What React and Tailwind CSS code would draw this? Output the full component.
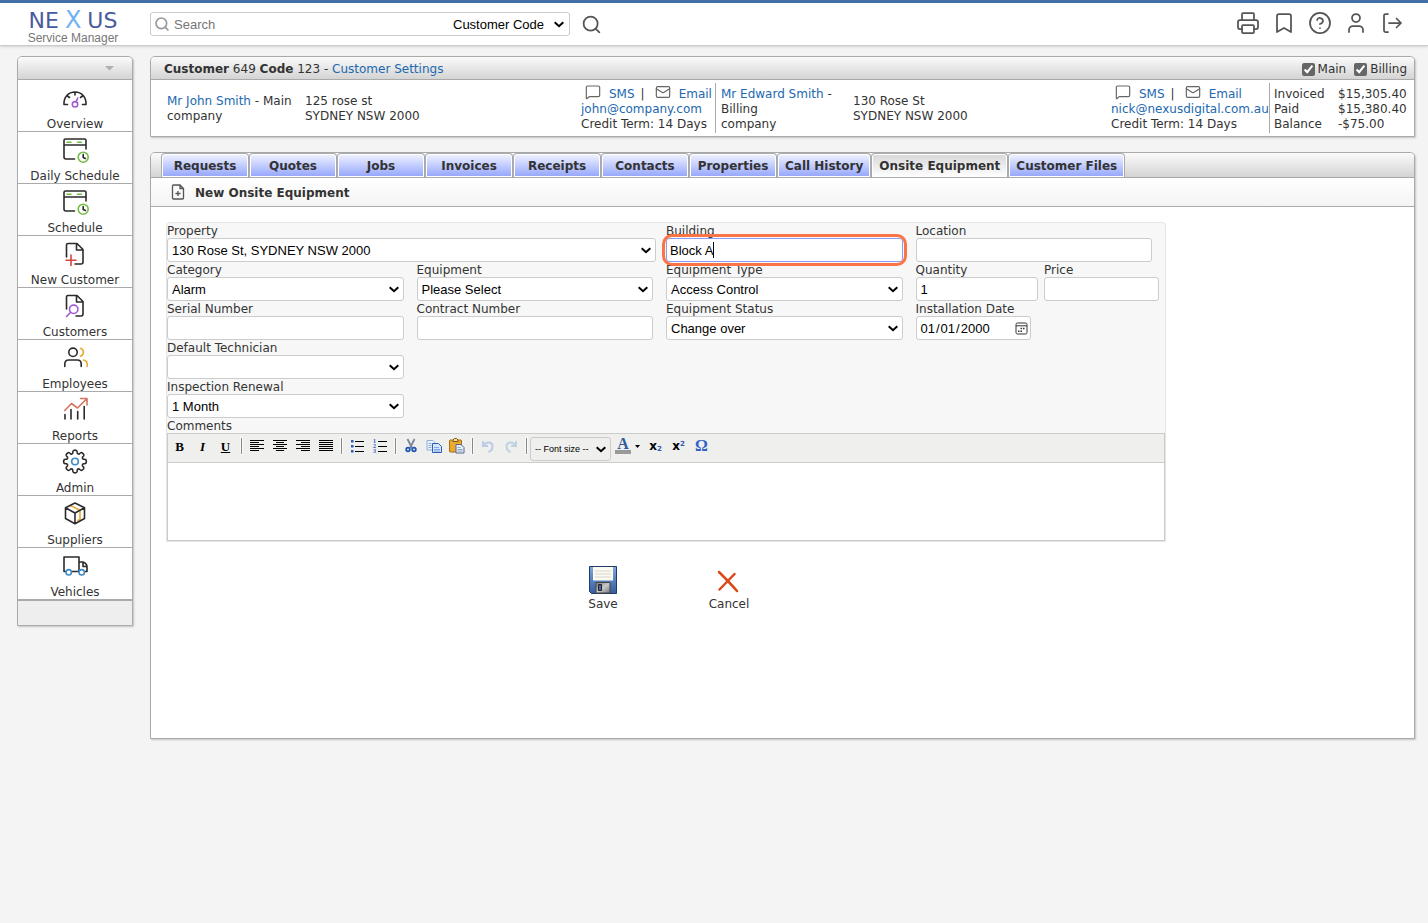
import React, { useState } from 'react';
import { Bookmark, CircleHelp, Mail, MessageSquare, Printer, Search, User } from 'lucide-react';

const DARK = '#2b2b2b';

const Icon = ({ children }) => (
  <svg width="28" height="28" viewBox="0 0 28 28" fill="none" stroke={DARK} strokeWidth="1.6" strokeLinecap="round" strokeLinejoin="round">
    {children}
  </svg>
);

const OverviewIcon = () => (
  <Icon>
    <path d="M3 20.5h3.5M21.5 20.5H25M3 20.5C2.5 13 7.5 8 14 8s11.500 5 11 12.500M14 8v3M6.500 12l2 1.500M21.500 12l-2 1.500" />
    <circle cx="14" cy="20.300" r="2.700" stroke="#a25bd0" />
    <path d="M15.200 17.600l1.500-3.600" stroke="#a25bd0" />
  </Icon>
);

const ScheduleIcon = () => (
  <Icon>
    <path d="M3 9h22M25 13V4.500Q25 3 23.500 3h-19Q3 3 3 4.500V21q0 2 2 2h8.500" />
    <path d="M6 6.300h4M16.500 6.300h4" stroke="#74bd46" />
    <circle cx="22.200" cy="21.200" r="5" stroke="#74bd46" />
    <path d="M22.200 18.500v3l2.200 1" />
  </Icon>
);

const NewCustomerIcon = () => (
  <Icon>
    <path d="M5.500 17V5q0-1.500 1.500-1.500h9l6 6V22q0 2-2 2h-6M15.500 3.500V10H22" />
    <path d="M10 15v10.500M5 20.200h10" stroke="#d5453c" />
  </Icon>
);

const CustomersIcon = () => (
  <Icon>
    <path d="M5.500 17V5q0-1.500 1.500-1.500h9l6 6V22q0 2-2 2h-5M15.500 3.500V10H22" />
    <circle cx="12.700" cy="17.300" r="4.200" stroke="#a25bd0" />
    <path d="M9.700 20.300L5.500 24.500" stroke="#a25bd0" />
  </Icon>
);

const EmployeesIcon = () => (
  <Icon>
    <circle cx="12" cy="8.300" r="4.200" />
    <path d="M3.800 22.500V20q0-4 4-4h8.400q4 0 4 4v2.500" />
    <path d="M19.500 4.300a4.200 4.200 0 0 1 0 8M22.500 16q3.700 1 3.700 4v2.500" stroke="#e8ac35" />
  </Icon>
);

const ReportsIcon = () => (
  <Icon>
    <path d="M4 18.500V23M10 13.500V23M16.700 15.500V23M23.200 10.500V23" />
    <path d="M3.700 14.500L10.500 7.500l6 4.500 9-9M19.500 2.500H26V9" stroke="#d4755f" />
  </Icon>
);

// eight rounded teeth around the hub
const gearPath = Array.from({ length: 8 }, (_, i) => {
  const at = (r, deg) => {
    const a = ((i * 45 + deg - 90) * Math.PI) / 180;
    return `${(14 + r * Math.cos(a)).toFixed(2)} ${(13.5 + r * Math.sin(a)).toFixed(2)}`;
  };
  return `${i ? 'L' : 'M'}${at(8.6, -15)} Q${at(11, -13)} ${at(11.2, -7)} Q${at(11.6, 0)} ${at(11.2, 7)} Q${at(11, 13)} ${at(8.6, 15)} Q${at(7.6, 22.5)} ${at(8.6, 30)}`;
}).join(' ') + 'Z';

const AdminIcon = () => (
  <Icon>
    <path d={gearPath} />
    <circle cx="14" cy="13.500" r="3.300" stroke="#3d8bc9" />
  </Icon>
);

const SuppliersIcon = () => (
  <Icon>
    <path d="M9.500 5.500l9.500 4.800v9l-2 1.200" stroke="#e8ac35" />
    <path d="M14 3l9.500 4.800v10.700L14 23.700 4.500 18.500V7.800zM4.500 7.800L14 13l9.500-5.200M14 13v10.700" />
  </Icon>
);

const VehiclesIcon = () => (
  <Icon>
    <path d="M5 19.500H3V5h15v14.500h-7.500M18 10h4q4 1.500 4 5v4.500h-2M22 10v4.500h4" />
    <circle cx="7.700" cy="20.300" r="2.700" stroke="#3d8bc9" />
    <circle cx="20.700" cy="20.300" r="2.700" stroke="#3d8bc9" />
  </Icon>
);

const menu = [
  { label: 'Overview', icon: OverviewIcon },
  { label: 'Daily Schedule', icon: ScheduleIcon },
  { label: 'Schedule', icon: ScheduleIcon },
  { label: 'New Customer', icon: NewCustomerIcon },
  { label: 'Customers', icon: CustomersIcon },
  { label: 'Employees', icon: EmployeesIcon },
  { label: 'Reports', icon: ReportsIcon },
  { label: 'Admin', icon: AdminIcon },
  { label: 'Suppliers', icon: SuppliersIcon },
  { label: 'Vehicles', icon: VehiclesIcon },
];

const tabs = [
  'Requests', 'Quotes', 'Jobs', 'Invoices', 'Receipts',
  'Contacts', 'Properties', 'Call History', 'Onsite Equipment', 'Customer Files',
];

const link = 'text-[#2268b0]';
const control = "block h-6 w-full rounded-[3px] border border-[#ccc] bg-white font-['Liberation_Sans',sans-serif] text-[13px] text-black";
const panel = 'rounded-t-[5px] border border-[#aaa] bg-white shadow-[1px_1px_2px_rgba(0,0,0,0.2)]';
const silver = 'bg-linear-to-b from-[#fbfbfb] to-[#d3d4d3]';

// select with our own chevron in place of the browser's
function Select({ className, wrapper = 'w-full', children, ...props }) {
  return (
    <div className={`relative ${wrapper}`}>
      <select className={`appearance-none pl-1 ${className}`} {...props}>{children}</select>
      <svg width="10" height="7" viewBox="0 0 10 7" fill="none" stroke="#000" strokeWidth="2" className="pointer-events-none absolute inset-y-0 right-[5px] my-auto">
        <path d="M0.700 1.200L5 5.200l4.300-4" />
      </svg>
    </div>
  );
}

function Header() {
  return (
    <header className="flex h-[46px] items-center border-t-[3px] border-b border-t-[#426fa8] border-b-[#ccc] bg-white pr-6 shadow-sm">
      <a href="#" aria-label="Nexus Service Manager" className="flex w-[150px] flex-col items-center pt-1 pr-1 font-['Liberation_Sans',sans-serif]">
        <span className="flex h-6 items-baseline gap-1.5 font-['DejaVu_Sans',sans-serif] text-[22px] leading-6 text-[#4a5a9c]">
          <span>NE</span>
          <span className="text-2xl leading-6 text-[#6fb1f3]">X</span>
          <span>US</span>
        </span>
        <span className="text-xs leading-3 text-[#777]">Service Manager</span>
      </a>
      <form className="flex items-center" onSubmit={(e) => e.preventDefault()}>
        <div className="flex h-6 w-[420px] items-center rounded-[3px] border border-[#ccc] pl-[3px] font-['Liberation_Sans',sans-serif] text-[13px]">
          <Search className="size-4 text-[#999]" strokeWidth={2.5} />
          <input aria-label="Search" placeholder="Search" className="ml-1 min-w-0 flex-1 outline-none placeholder:text-[#757575]" />
          <Select aria-label="Search by" wrapper="w-[120px]" className="h-5 w-full text-black">
            <option>Customer Code</option>
          </Select>
        </div>
        <button type="submit" aria-label="Search" className="ml-[11px] text-[#555]">
          <Search className="size-[21px]" strokeWidth={2} />
        </button>
      </form>
      <nav className="ml-auto flex items-center gap-3 pb-0.5 text-[#555]">
        <button aria-label="Print"><Printer className="size-6" strokeWidth={1.75} /></button>
        <button aria-label="Bookmarks"><Bookmark className="size-6" strokeWidth={1.75} /></button>
        <button aria-label="Help"><CircleHelp className="size-6" strokeWidth={1.75} /></button>
        <button aria-label="Account"><User className="size-6" strokeWidth={1.75} /></button>
        <button aria-label="Log out">
          <svg width="24" height="24" viewBox="0 0 24 24" fill="none" stroke="currentColor" strokeWidth="1.75" strokeLinecap="round" strokeLinejoin="round">
            <path d="M8 3H5.500Q4 3 4 4.500v15Q4 21 5.500 21H8M9 12h12M16.500 7.500L21 12l-4.500 4.500" />
          </svg>
        </button>
      </nav>
    </header>
  );
}

function Sidebar() {
  return (
    <aside className={`w-[116px] shrink-0 ${panel}`}>
      <div className={`flex h-[23px] items-center justify-end rounded-t-[4px] border-b border-[#aaa] pr-[18px] ${silver}`}>
        <svg width="9" height="5" viewBox="0 0 9 5"><path d="M0 0h9L4.500 4.500z" fill="#b0b0b0" /></svg>
      </div>
      <ul>
        {menu.map(({ label, icon: MenuIcon }) => (
          <li key={label} className="border-b border-[#aaa]">
            <a href="#" className="block h-[51px] text-center leading-[17px]">
              <span className="flex h-9 items-center justify-center"><MenuIcon /></span>
              {label}
            </a>
          </li>
        ))}
      </ul>
      <div className="h-[25px] border-t border-[#aaa] bg-[#eee]" />
    </aside>
  );
}

function ContactLinks({ email }) {
  return (
    <div>
      <div className="flex h-[15px] items-center">
        <MessageSquare className="mr-2 mb-1 ml-1 size-4 text-[#666]" strokeWidth={1.75} />
        <a href="#" className={link}>SMS</a>
        <span className="mx-1.5">|</span>
        <Mail className="mr-2 mb-1 ml-1 size-4 text-[#666]" strokeWidth={1.75} />
        <a href="#" className={link}>Email</a>
      </div>
      <a href="#" className={`block ${link}`}>{email}</a>
      <div>Credit Term: 14 Days</div>
    </div>
  );
}

function CustomerPanel() {
  return (
    <section className={panel}>
      <div className={`flex h-[23px] items-center rounded-t-[4px] border-b border-[#aaa] pt-0.5 pr-[7px] pl-[13px] ${silver}`}>
        <div className="flex-1">
          <b>Customer</b> 649 <b>Code</b> 123 - <a href="#" className={link}>Customer Settings</a>
        </div>
        <label className="mr-2 flex items-center gap-[3px]">
          <input type="checkbox" defaultChecked className="size-[13px] accent-[#666]" />Main
        </label>
        <label className="flex items-center gap-[3px]">
          <input type="checkbox" defaultChecked className="size-[13px] accent-[#666]" />Billing
        </label>
      </div>
      <div className="grid h-14 grid-cols-[138px_276fr_135px_137px_258fr_159px_64px_80px] items-center pl-4 whitespace-nowrap">
        <div className="pt-0.5">
          <a href="#" className={link}>Mr John Smith</a> - Main<br />company
        </div>
        <div className="pt-0.5">125 rose st<br />SYDNEY NSW 2000</div>
        <div className="flex h-[50px] items-center border-r border-[#aaa] pt-0.5"><ContactLinks email="john@company.com" /></div>
        <div className="pt-0.5 pl-[5px]">
          <a href="#" className={link}>Mr Edward Smith</a> -<br />Billing<br />company
        </div>
        <div className="pt-0.5">130 Rose St<br />SYDNEY NSW 2000</div>
        <div className="flex h-[50px] items-center border-r border-[#aaa] pt-0.5"><ContactLinks email="nick@nexusdigital.com.au" /></div>
        <div className="pt-0.5 pl-1">Invoiced<br />Paid<br />Balance</div>
        <div className="pt-0.5 pl-1">$15,305.40<br />$15,380.40<br />-$75.00</div>
      </div>
    </section>
  );
}

function Field({ id, label, className = 'pr-[13px]', children }) {
  return (
    <div className={className}>
      <label htmlFor={id} className="block h-[15px] leading-[17px]">{label}</label>
      {children}
    </div>
  );
}

function SelectField({ id, label, value, className }) {
  return (
    <Field id={id} label={label} className={className}>
      <Select id={id} className={control}>
        <option>{value}</option>
      </Select>
    </Field>
  );
}

function TextField({ id, label, value, className }) {
  return (
    <Field id={id} label={label} className={className}>
      <input id={id} defaultValue={value} className={`${control} px-1`} />
    </Field>
  );
}

const ToolButton = ({ label, children }) => (
  <button type="button" aria-label={label} className="flex h-6 w-[23px] items-center justify-center font-['Liberation_Serif',serif] text-[13px] font-bold text-black">
    {children}
  </button>
);

const Separator = () => <span className="mr-[3px] ml-1 h-4 w-px bg-[#888] ring-1 ring-white/60" />;

const Tool = ({ children }) => <svg width="16" height="16" viewBox="0 0 16 16" fill="none">{children}</svg>;

const Lines = ({ d }) => <Tool><path d={d} stroke="#000" shapeRendering="crispEdges" /></Tool>;

function Toolbar() {
  return (
    <div className="flex h-[29px] items-start border-b border-[#ccc] bg-[#efefee]">
      <div className="flex items-center">
        <ToolButton label="Bold">B</ToolButton>
        <ToolButton label="Italic"><i>I</i></ToolButton>
        <ToolButton label="Underline"><u>U</u></ToolButton>
        <Separator />
        <ToolButton label="Align left"><Lines d="M1 2.500h14M1 4.500h9M1 6.500h14M1 8.500h9M1 10.500h14M1 12.500h9" /></ToolButton>
        <ToolButton label="Align center"><Lines d="M1 2.500h14M4 4.500h8M1 6.500h14M4 8.500h8M1 10.500h14M4 12.500h8" /></ToolButton>
        <ToolButton label="Align right"><Lines d="M1 2.500h14M6 4.500h9M1 6.500h14M6 8.500h9M1 10.500h14M6 12.500h9" /></ToolButton>
        <ToolButton label="Justify"><Lines d="M1 2.500h14M1 4.500h14M1 6.500h14M1 8.500h14M1 10.500h14M1 12.500h14" /></ToolButton>
        <Separator />
        <ToolButton label="Bullet list">
          <Tool>
            <path d="M6 3.500h9M6 8.500h9M6 13.500h9" stroke="#000" />
            <path d="M2 2h2.500v2.500H2zM2 7h2.500v2.500H2zM2 12h2.500v2.500H2z" fill="#2d5ab5" />
          </Tool>
        </ToolButton>
        <ToolButton label="Numbered list">
          <Tool>
            <path d="M6 3.500h9M6 8.500h9M6 13.500h9" stroke="#000" />
            <text x="1" y="5" fontSize="6" fill="#2d5ab5">1</text>
            <text x="1" y="10" fontSize="6" fill="#2d5ab5">2</text>
            <text x="1" y="15" fontSize="6" fill="#2d5ab5">3</text>
          </Tool>
        </ToolButton>
        <Separator />
        <ToolButton label="Cut">
          <Tool>
            <path d="M4.500 1l4.500 9M11.500 1L7 10" stroke="#7c8797" strokeWidth="1.800" />
            <circle cx="5" cy="11.500" r="1.800" stroke="#1f56b3" strokeWidth="1.800" />
            <circle cx="11" cy="11.500" r="1.800" stroke="#1f56b3" strokeWidth="1.800" />
          </Tool>
        </ToolButton>
        <ToolButton label="Copy">
          <Tool>
            <path d="M1 2.500h6l2.500 2.500v7H1z" fill="#eaf2fd" stroke="#8cb0e0" />
            <path d="M6.500 5.500h6l3 3v6h-9z" fill="#d4e4fa" stroke="#2d5fb8" />
            <path d="M2.500 5.500h3M2.500 7.500h3M2.500 9.500h3M8 9.500h5M8 11.500h6M8 13h6" stroke="#6f9ade" strokeWidth="0.800" />
          </Tool>
        </ToolButton>
        <ToolButton label="Paste">
          <Tool>
            <rect x="0.500" y="2" width="12" height="12" rx="1" fill="#eba92f" stroke="#a56a14" />
            <path d="M4 3.500V2l1.500-1.500h2L9 2v1.500z" fill="#f8dd7e" stroke="#7a541b" />
            <path d="M7 6.500h5l3 3v5.500H7z" fill="#e9effa" stroke="#55688c" />
            <path d="M8.500 9.500h3M8.500 11.500h5M8.500 13h5" stroke="#7a94bb" strokeWidth="0.800" />
          </Tool>
        </ToolButton>
        <Separator />
        <ToolButton label="Undo">
          <Tool><path d="M3 3v5h5M3.500 7.500C6 3 12.500 3.500 12.500 8.500c0 2.500-1.500 4.500-4 5.500" stroke="#bccbe5" strokeWidth="2" /></Tool>
        </ToolButton>
        <ToolButton label="Redo">
          <Tool><path d="M13 3v5H8M12.500 7.500C10 3 3.500 3.500 3.500 8.500c0 2.500 1.500 4.500 4 5.500" stroke="#c0d2e2" strokeWidth="2" /></Tool>
        </ToolButton>
        <Separator />
      </div>
      <Select
        aria-label="Font size"
        wrapper="mt-[3px] w-[81px]"
        className="block h-6 w-full rounded-[3px] border border-[#ccc] bg-[#efefee] font-['Liberation_Sans',sans-serif] text-[9px] text-black"
      >
        <option>-- Font size --</option>
      </Select>
      <div className="flex items-center">
        <button type="button" aria-label="Text colour" className="flex h-6 w-[33px] items-center justify-center gap-1">
          <span className="border-b-4 border-[#999] px-0.5 font-['Liberation_Serif',serif] text-base leading-3 font-bold text-[#31599b]">A</span>
          <svg width="5" height="3" viewBox="0 0 5 3"><path d="M0 0h5L2.500 3z" /></svg>
        </button>
        <button type="button" aria-label="Subscript" className="h-6 w-[23px] font-bold text-black">x<sub className="text-[7px] text-[#2d5ab5]">2</sub></button>
        <button type="button" aria-label="Superscript" className="h-6 w-[23px] font-bold text-black">x<sup className="text-[7px] text-[#2d5ab5]">2</sup></button>
        <button type="button" aria-label="Symbol" className="h-6 w-[23px] font-['Liberation_Serif',serif] text-base font-bold text-[#2f62c9]">Ω</button>
      </div>
    </div>
  );
}

function EquipmentForm() {
  const [building, setBuilding] = useState('Block A');

  return (
    <form className="max-w-[1000px]" onSubmit={(e) => e.preventDefault()}>
      <div className="rounded-t-[4px] border border-[#e5e5e5] bg-[#f7f7f7]">
        <div className="grid grid-cols-4">
          <SelectField id="property" label="Property" value="130 Rose St, SYDNEY NSW 2000" className="col-span-2 pr-2.5" />
          <Field id="building" label="Building">
            <div className="relative">
              <input
                id="building"
                value={building}
                onChange={(e) => setBuilding(e.target.value)}
                className={`${control} border-[#8a9cf5]! px-[3px]`}
              />
              <span className="absolute top-1 left-[47px] h-4 w-px bg-black" />
              <span className="pointer-events-none absolute -inset-1 rounded-[10px] border-[3px] border-[#fb7445]" />
            </div>
          </Field>
          <TextField id="location" label="Location" />

          <SelectField id="category" label="Category" value="Alarm" />
          <SelectField id="equipment" label="Equipment" value="Please Select" />
          <SelectField id="type" label="Equipment Type" value="Access Control" />
          <div className="flex gap-1.5 pr-1.5">
            <TextField id="quantity" label="Quantity" value="1" className="min-w-0 flex-1" />
            <TextField id="price" label="Price" className="w-[115px]" />
          </div>

          <TextField id="serial" label="Serial Number" />
          <TextField id="contract" label="Contract Number" />
          <SelectField id="status" label="Equipment Status" value="Change over" />
          <Field id="installed" label="Installation Date" className="w-[115px]">
            <div className="relative">
              <input
                id="installed"
                type="date"
                defaultValue="2000-01-01"
                className={`${control} px-[3px] [&::-webkit-calendar-picker-indicator]:opacity-0`}
              />
              <svg width="13" height="13" viewBox="0 0 13 13" fill="none" stroke="#333" className="pointer-events-none absolute inset-y-0 right-[3px] my-auto">
                <rect x="1" y="1" width="11" height="11" rx="1.500" />
                <path d="M1 3.800h11" />
                <path d="M5.500 6.500h1.500M8 6.500h1.500M3 9.200h1.500M5.500 9.200h1.500" strokeWidth="1.500" />
              </svg>
            </div>
          </Field>

          <SelectField id="technician" label="Default Technician" value="" className="col-start-1 pr-[13px]" />
          <SelectField id="renewal" label="Inspection Renewal" value="1 Month" className="col-start-1 pr-[13px]" />
        </div>
        <label htmlFor="comments" className="block h-[15px] leading-[17px]">Comments</label>
        <div className="border border-[#ccc]">
          <Toolbar />
          <textarea id="comments" className="block h-[77px] w-full resize-none bg-white p-1 outline-none" />
        </div>
      </div>

      <div className="mt-[23px] flex justify-center">
        <button type="submit" className="flex w-[126px] flex-col items-center gap-0.5">
          <svg width="30" height="30" viewBox="0 0 30 30">
            <defs>
              <linearGradient id="disk" x1="0" y1="0" x2="0" y2="1">
                <stop offset="0" stopColor="#7fa9dc" />
                <stop offset="1" stopColor="#345d9e" />
              </linearGradient>
              <linearGradient id="shutter" x1="0" y1="0" x2="1" y2="1">
                <stop offset="0" stopColor="#777" />
                <stop offset="0.500" stopColor="#c9c9c9" />
                <stop offset="1" stopColor="#777" />
              </linearGradient>
            </defs>
            <path d="M1.500 1.500h27v27H3.500l-2-2z" fill="url(#disk)" stroke="#22396b" />
            <path d="M5 2h20v13.500H5z" fill="#fdfaf0" />
            <path d="M7 6h16M7 9h16M7 12h16" stroke="#d5d5d5" />
            <path d="M8 17.500h14v10.500H8z" fill="url(#shutter)" stroke="#444" />
            <path d="M10.500 19.500h3v6h-3z" fill="#4a6699" stroke="#222" />
          </svg>
          Save
        </button>
        <button type="button" className="flex w-[126px] flex-col items-center gap-0.5">
          <svg width="30" height="30" viewBox="0 0 30 30" fill="none" stroke="#dd4814" strokeLinecap="round">
            <path d="M5 7C10 12 17 19 23 26" strokeWidth="2.500" />
            <path d="M20.500 9L5.500 24.500" strokeWidth="2.500" />
          </svg>
          Cancel
        </button>
      </div>
    </form>
  );
}

export default function App() {
  const [active, setActive] = useState('Onsite Equipment');

  return (
    <div className="min-h-screen bg-[#f4f4f4] font-['DejaVu_Sans',sans-serif] text-xs leading-[15px] text-[#333]">
      <Header />

      <div className="flex items-start gap-[17px] pt-2.5 pr-[13px] pl-[17px]">
        <Sidebar />

        <main className="min-w-0 flex-1">
          <CustomerPanel />

          <section className={`mt-[15px] min-h-[587px] ${panel}`}>
            <div className={`flex h-[25px] items-end rounded-t-[4px] border-b border-[#aaa] pl-2.5 ${silver}`} role="tablist">
              {tabs.map((tab) => (
                <button
                  key={tab}
                  role="tab"
                  aria-selected={tab === active}
                  onClick={() => setActive(tab)}
                  className={`h-6 min-w-[88px] rounded-t-[4px] border border-b-0 border-[#aaa] px-[7px] pt-0.5 font-bold whitespace-nowrap shadow-[inset_0_0_0_1px_#fff] ${
                    tab === active
                      ? 'bg-linear-to-b from-[#d6d7d6] to-white'
                      : 'bg-linear-to-b from-[#f3f4ff] to-[#94a4fb]'
                  }`}
                >
                  {tab}
                </button>
              ))}
            </div>

            <h1 className="flex h-[29px] items-center border-b border-[#aaa] bg-linear-to-b from-white to-[#f4f4f4] pl-5 font-bold">
              <svg width="14" height="16" viewBox="0 0 14 16" fill="none" stroke="#555" strokeWidth="1.300" className="mr-2.5">
                <path d="M1.500 2q0-1 1-1H9l3.500 3.500V14q0 1-1 1h-9q-1 0-1-1zM9 1v3.500h3.500M7 7v5M4.500 9.500h5" />
              </svg>
              <span className="pt-0.5">New Onsite Equipment</span>
            </h1>

            <div className="px-[15px] pt-[15px]">
              <EquipmentForm />
            </div>
          </section>
        </main>
      </div>
    </div>
  );
}
